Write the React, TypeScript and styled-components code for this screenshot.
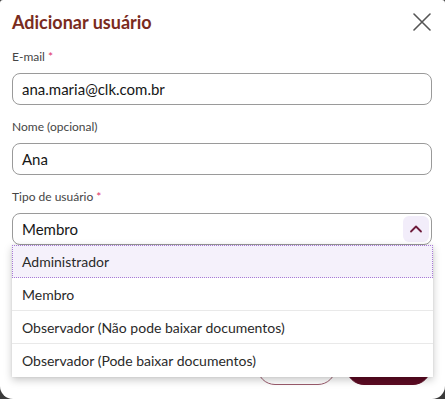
import React from 'react'
import styled, { createGlobalStyle } from 'styled-components'

const Global = createGlobalStyle`
  html, body { margin: 0; padding: 0; }
  body {
    background: #3b3b3b;
    font-family: Lato, 'Liberation Sans', sans-serif;
    width: 445px;
    height: 399px;
    overflow: hidden;
  }
`

const Dialog = styled.div`
  box-sizing: border-box;
  width: 445px;
  height: 399px;
  background: #fff;
  border-radius: 3px 3px 13px 13px;
  padding: 10px 13px 0 12px;
  display: flex;
  flex-direction: column;
`

const Header = styled.div`
  display: flex;
  align-items: center;
  justify-content: space-between;
  height: 24px;
  margin-bottom: 16px;
`

const Title = styled.h2`
  margin: 0;
  font-size: 18px;
  font-weight: 700;
  color: #7a2b1d;
`

const CloseButton = styled.button`
  border: 0;
  background: none;
  padding: 0;
  width: 22px;
  height: 22px;
  margin-right: -1px;
  display: flex;
  align-items: center;
  justify-content: center;
  color: #555;
`

const Field = styled.div`
  display: flex;
  flex-direction: column;
  margin-bottom: 15px;
  position: relative;
`

const Label = styled.label`
  font-size: 12px;
  line-height: 14px;
  color: #454545;
  margin-bottom: 9px;
  span { color: #e0336a; }
`

const Input = styled.div`
  box-sizing: border-box;
  height: 32px;
  border: 1px solid #9a9a9a;
  border-radius: 8px;
  padding: 0 9px;
  display: flex;
  align-items: center;
  justify-content: space-between;
  font-size: 15px;
  color: #161616;
`

const ChevronBox = styled.div`
  width: 26px;
  height: 26px;
  margin-right: -7px;
  border-radius: 6px;
  background: #f2edfa;
  display: flex;
  align-items: center;
  justify-content: center;
  color: #6e1c3c;
`

const Menu = styled.ul`
  position: absolute;
  top: 55px;
  left: 0;
  right: -1px;
  margin: 0;
  padding: 0;
  list-style: none;
  background: #fff;
  box-shadow: 0 3px 8px rgba(0, 0, 0, 0.22), 0 0 2px rgba(0, 0, 0, 0.08);
  z-index: 2;
`

const Option = styled.li<{ active?: boolean }>`
  box-sizing: border-box;
  height: 33px;
  display: flex;
  align-items: center;
  font-size: 14px;
  color: #2a2a2a;
  background: ${p => p.active ? '#f5f1fb' : '#fff'};
  border: ${p => p.active ? '1px dotted #a77ad6' : '0'};
  border-bottom: ${p => p.active ? '1px dotted #a77ad6' : '1px solid #e9e9e9'};
  padding: 0 9px 0 ${p => p.active ? '9px' : '10px'};
  &:last-child { border-bottom: 0; }
`

const Footer = styled.div`
  margin-top: auto;
  margin-bottom: 14px;
  display: flex;
  justify-content: flex-end;
  gap: 10px;
  padding-right: 1px;
`

const Button = styled.button<{ primary?: boolean }>`
  height: 36px;
  border-radius: 18px;
  font-family: inherit;
  font-size: 14px;
  font-weight: 700;
  padding: 0;
  width: ${p => p.primary ? '85px' : '79px'};
  border: 1px solid ${p => p.primary ? '#5c0b23' : '#9a5a6c'};
  background: ${p => p.primary ? '#5c0b23' : '#fff'};
  color: ${p => p.primary ? '#fff' : '#5c0b23'};
`

const options = [
  'Administrador',
  'Membro',
  'Observador (Não pode baixar documentos)',
  'Observador (Pode baixar documentos)',
]

export default function App() {
  return <>
    <Global />
    <Dialog>
      <Header>
        <Title>Adicionar usuário</Title>
        <CloseButton aria-label="Fechar">
          <svg width="18" height="18" viewBox="0 0 18 18" fill="none" stroke="currentColor" strokeWidth="1.6" strokeLinecap="round">
            <path d="M1 1 L17 17 M17 1 L1 17" />
          </svg>
        </CloseButton>
      </Header>

      <Field>
        <Label>E-mail <span>*</span></Label>
        <Input>ana.maria@clk.com.br</Input>
      </Field>

      <Field>
        <Label>Nome (opcional)</Label>
        <Input>Ana</Input>
      </Field>

      <Field>
        <Label>Tipo de usuário <span>*</span></Label>
        <Input>
          Membro
          <ChevronBox>
            <svg width="14" height="14" viewBox="0 0 14 14" fill="none" stroke="currentColor" strokeWidth="1.8" strokeLinecap="round" strokeLinejoin="round">
              <path d="M2 9.5 L7 4.5 L12 9.5" />
            </svg>
          </ChevronBox>
        </Input>
        <Menu>
          {options.map((o, i) => <Option key={o} active={i === 0}>{o}</Option>)}
        </Menu>
      </Field>

      <Footer>
        <Button>Cancelar</Button>
        <Button primary>Adicionar</Button>
      </Footer>
    </Dialog>
  </>
}
